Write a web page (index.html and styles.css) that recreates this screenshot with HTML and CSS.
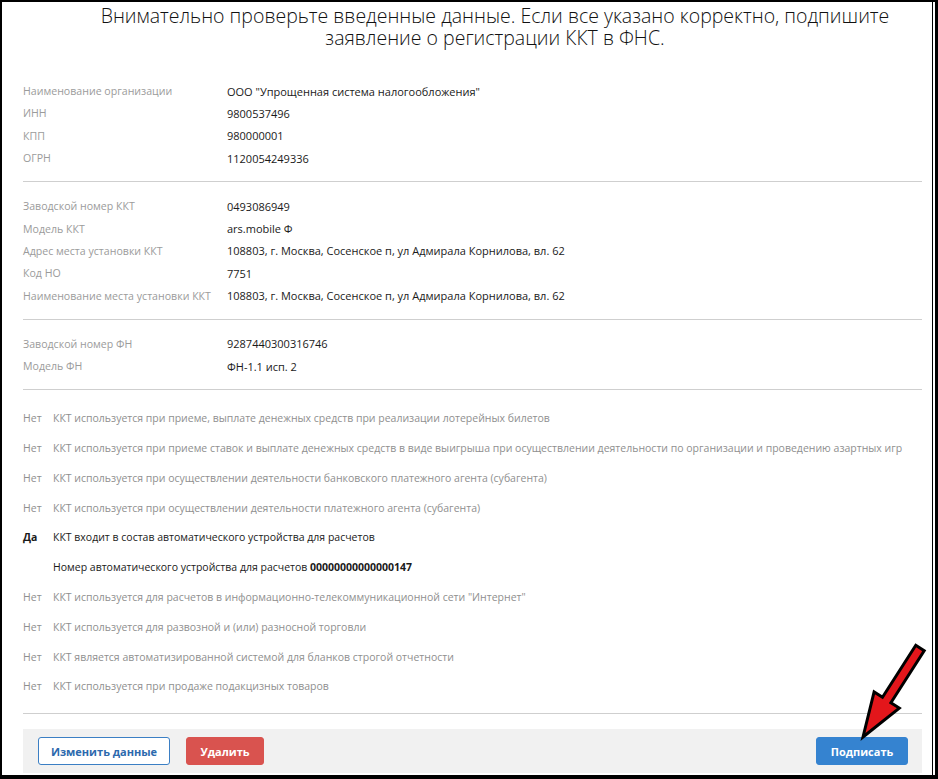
FILE: index.html
```html
<!DOCTYPE html>
<html lang="ru">
<head>
<meta charset="utf-8">
<title>Регистрация ККТ</title>
<link rel="stylesheet" href="styles.css">
</head>
<body>
<div class="frame">
  <div class="page">
    <h1 class="title">Внимательно проверьте введенные данные. Если все указано корректно, подпишите заявление о регистрации ККТ в ФНС.</h1>

    <div class="section first">
      <div class="grid">
        <div class="label">Наименование организации</div><div class="value">ООО "Упрощенная система налогообложения"</div>
        <div class="label">ИНН</div><div class="value">9800537496</div>
        <div class="label">КПП</div><div class="value">980000001</div>
        <div class="label">ОГРН</div><div class="value">1120054249336</div>
      </div>
    </div>

    <div class="section">
      <div class="grid">
        <div class="label">Заводской номер ККТ</div><div class="value">0493086949</div>
        <div class="label">Модель ККТ</div><div class="value">ars.mobile Ф</div>
        <div class="label">Адрес места установки ККТ</div><div class="value">108803, г. Москва, Сосенское п, ул Адмирала Корнилова, вл. 62</div>
        <div class="label">Код НО</div><div class="value">7751</div>
        <div class="label">Наименование места установки ККТ</div><div class="value">108803, г. Москва, Сосенское п, ул Адмирала Корнилова, вл. 62</div>
      </div>
    </div>

    <div class="section">
      <div class="grid">
        <div class="label">Заводской номер ФН</div><div class="value">9287440300316746</div>
        <div class="label">Модель ФН</div><div class="value">ФН-1.1 исп. 2</div>
      </div>
    </div>

    <div class="section flags">
      <div class="flag"><span class="ans">Нет</span><span class="txt">ККТ используется при приеме, выплате денежных средств при реализации лотерейных билетов</span></div>
      <div class="flag"><span class="ans">Нет</span><span class="txt">ККТ используется при приеме ставок и выплате денежных средств в виде выигрыша при осуществлении деятельности по организации и проведению азартных игр</span></div>
      <div class="flag"><span class="ans">Нет</span><span class="txt">ККТ используется при осуществлении деятельности банковского платежного агента (субагента)</span></div>
      <div class="flag"><span class="ans">Нет</span><span class="txt">ККТ используется при осуществлении деятельности платежного агента (субагента)</span></div>
      <div class="flag yes"><span class="ans">Да</span><span class="txt">ККТ входит в состав автоматического устройства для расчетов</span></div>
      <div class="flag yes"><span class="ans"></span><span class="txt">Номер автоматического устройства для расчетов <b>00000000000000147</b></span></div>
      <div class="flag"><span class="ans">Нет</span><span class="txt">ККТ используется для расчетов в информационно-телекоммуникационной сети "Интернет"</span></div>
      <div class="flag"><span class="ans">Нет</span><span class="txt">ККТ используется для развозной и (или) разносной торговли</span></div>
      <div class="flag"><span class="ans">Нет</span><span class="txt">ККТ является автоматизированной системой для бланков строгой отчетности</span></div>
      <div class="flag"><span class="ans">Нет</span><span class="txt">ККТ используется при продаже подакцизных товаров</span></div>
    </div>

    <div class="footer">
      <div class="left-btns">
        <button class="btn btn-outline">Изменить данные</button>
        <button class="btn btn-danger">Удалить</button>
      </div>
      <button class="btn btn-primary">Подписать</button>
    </div>
  </div>

  <svg class="arrow" width="938" height="779" viewBox="0 0 938 779" xmlns="http://www.w3.org/2000/svg">
    <polygon points="924.2,650.7 890.9,702.7 899.3,708.1 863,737 874.1,691.9 882.5,697.3 915.8,645.3" fill="#e3161b" stroke="#000" stroke-width="3" stroke-linejoin="miter"/>
  </svg>
</div>
</body>
</html>
```

FILE: styles.css
```css
* { box-sizing: border-box; }

html, body {
  margin: 0;
  padding: 0;
  background: #fff;
}

body {
  font-family: "Open Sans", "Noto Sans", sans-serif;
  color: #1a1a1a;
}

.frame {
  position: relative;
  width: 938px;
  height: 779px;
  border-left: 2px solid #000;
  border-top: 2px solid #000;
  border-bottom: 4px solid #000;
  border-right: 3px solid #000;
  background: #fff;
  overflow: hidden;
}

.page {
  height: 100%;
  margin-right: 2px;
  border-right: 1px solid #000;
  padding: 0 10px 0 21px;
  display: flex;
  flex-direction: column;
}

.title {
  margin: 3px 0 0 0;
  padding-left: 45px;
  font-weight: 300;
  font-size: 19.5px;
  line-height: 22px;
  text-align: center;
  color: #111;
}

.section {
  padding: 13px 0 12px 0;
  border-bottom: 1px solid #cfcfcf;
}

.section.first {
  margin-top: 31px;
  padding-top: 0;
}

.grid {
  display: grid;
  grid-template-columns: 204px 1fr;
  grid-auto-rows: 22.3px;
  align-items: center;
}

.label {
  color: #9b9b9b;
  font-size: 10.6px;
  white-space: nowrap;
}

.value {
  color: #1a1a1a;
  font-size: 11px;
  white-space: nowrap;
}

.flags {
  padding-bottom: 12px;
}

.flag {
  display: flex;
  align-items: center;
  height: 29.8px;
  font-size: 10.5px;
  color: #8f8f8f;
  white-space: nowrap;
}

.flag .ans {
  width: 30px;
  flex: none;
}

.flag.yes {
  color: #1a1a1a;
}

.flag.yes .ans {
  font-weight: 700;
}

.flag b {
  font-weight: 700;
}

.footer {
  margin-top: 15px;
  height: 44px;
  background: #f1f1f1;
  display: flex;
  align-items: center;
  justify-content: space-between;
  padding: 0 14px 0 15px;
}

.left-btns {
  display: flex;
  gap: 16px;
}

.btn {
  height: 28px;
  border-radius: 3px;
  font-family: "Open Sans", "Noto Sans", sans-serif;
  font-weight: 700;
  font-size: 11px;
  cursor: pointer;
  border: 1px solid transparent;
  padding: 0;
}

.btn-outline {
  width: 132px;
  background: #fff;
  border-color: #3b7fc4;
  color: #2c69ad;
}

.btn-danger {
  width: 78px;
  background: #d9534f;
  border-color: #d9534f;
  color: #fff;
}

.btn-primary {
  width: 92px;
  background: #3583d0;
  border-color: #3583d0;
  color: #fff;
}

.arrow {
  position: absolute;
  left: -2px;
  top: -2px;
  pointer-events: none;
}
```
